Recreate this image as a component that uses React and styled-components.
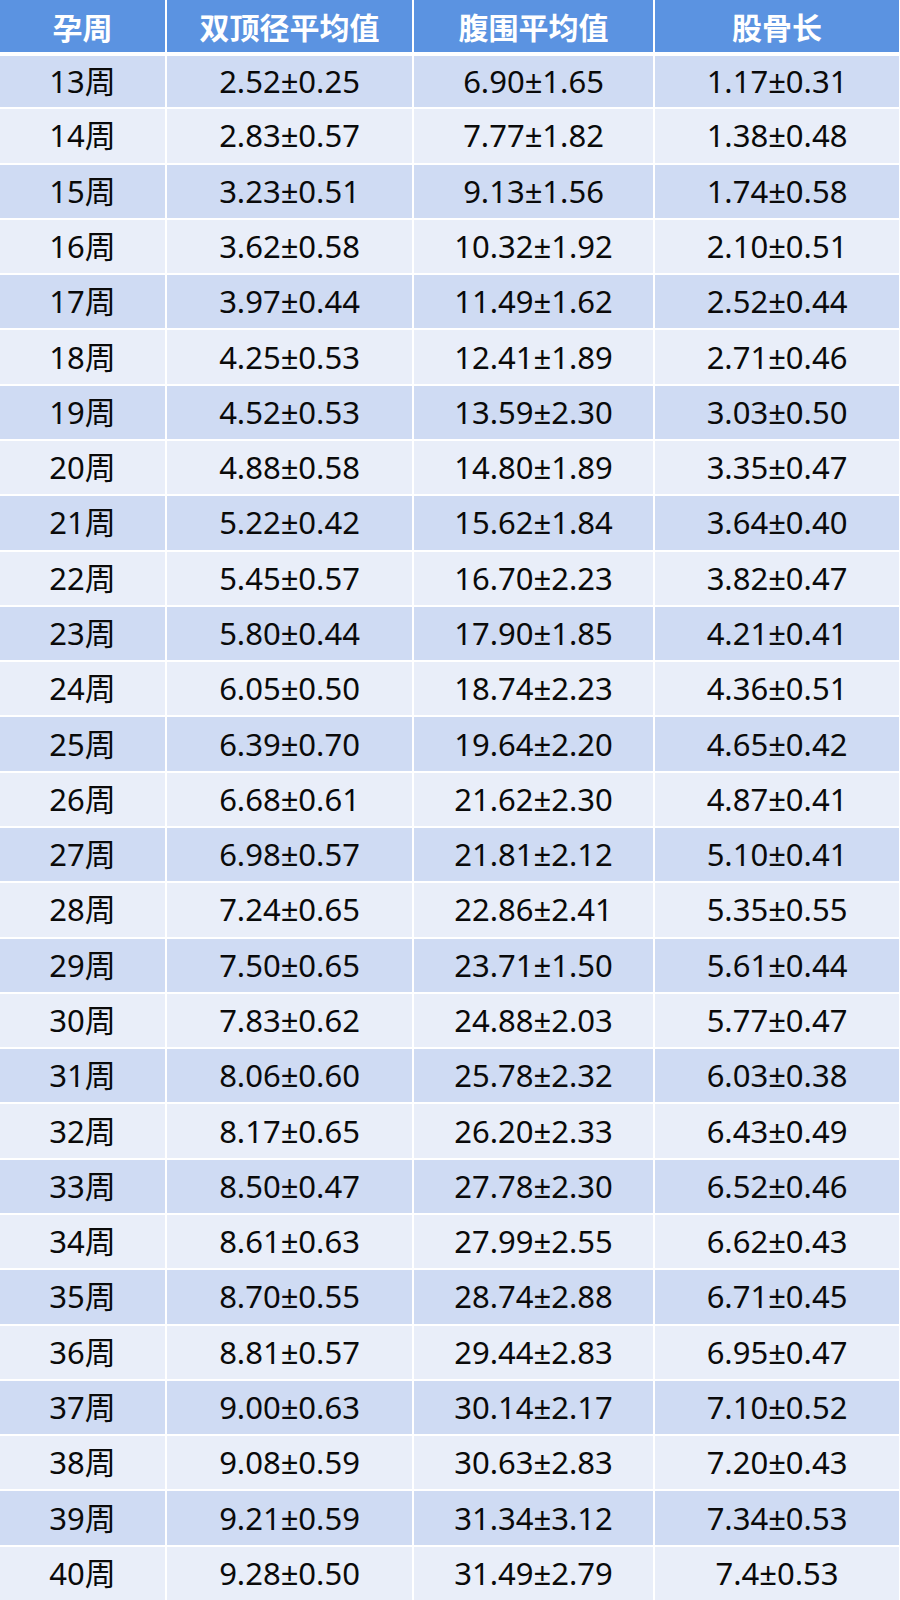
import React from 'react';
import styled, { createGlobalStyle } from 'styled-components';

const GlobalStyle = createGlobalStyle`
  html, body {
    margin: 0;
    padding: 0;
    background: #ffffff;
  }
  body {
    font-family: "Noto Sans", "Noto Sans CJK SC", sans-serif;
  }
`;

const rows = [
  ['13周', '2.52±0.25', '6.90±1.65', '1.17±0.31'],
  ['14周', '2.83±0.57', '7.77±1.82', '1.38±0.48'],
  ['15周', '3.23±0.51', '9.13±1.56', '1.74±0.58'],
  ['16周', '3.62±0.58', '10.32±1.92', '2.10±0.51'],
  ['17周', '3.97±0.44', '11.49±1.62', '2.52±0.44'],
  ['18周', '4.25±0.53', '12.41±1.89', '2.71±0.46'],
  ['19周', '4.52±0.53', '13.59±2.30', '3.03±0.50'],
  ['20周', '4.88±0.58', '14.80±1.89', '3.35±0.47'],
  ['21周', '5.22±0.42', '15.62±1.84', '3.64±0.40'],
  ['22周', '5.45±0.57', '16.70±2.23', '3.82±0.47'],
  ['23周', '5.80±0.44', '17.90±1.85', '4.21±0.41'],
  ['24周', '6.05±0.50', '18.74±2.23', '4.36±0.51'],
  ['25周', '6.39±0.70', '19.64±2.20', '4.65±0.42'],
  ['26周', '6.68±0.61', '21.62±2.30', '4.87±0.41'],
  ['27周', '6.98±0.57', '21.81±2.12', '5.10±0.41'],
  ['28周', '7.24±0.65', '22.86±2.41', '5.35±0.55'],
  ['29周', '7.50±0.65', '23.71±1.50', '5.61±0.44'],
  ['30周', '7.83±0.62', '24.88±2.03', '5.77±0.47'],
  ['31周', '8.06±0.60', '25.78±2.32', '6.03±0.38'],
  ['32周', '8.17±0.65', '26.20±2.33', '6.43±0.49'],
  ['33周', '8.50±0.47', '27.78±2.30', '6.52±0.46'],
  ['34周', '8.61±0.63', '27.99±2.55', '6.62±0.43'],
  ['35周', '8.70±0.55', '28.74±2.88', '6.71±0.45'],
  ['36周', '8.81±0.57', '29.44±2.83', '6.95±0.47'],
  ['37周', '9.00±0.63', '30.14±2.17', '7.10±0.52'],
  ['38周', '9.08±0.59', '30.63±2.83', '7.20±0.43'],
  ['39周', '9.21±0.59', '31.34±3.12', '7.34±0.53'],
  ['40周', '9.28±0.50', '31.49±2.79', '7.4±0.53'],
];

const headers = ['孕周', '双顶径平均值', '腹围平均值', '股骨长'];

const Table = styled.div`
  width: 900px;
  height: 1600px;
  display: grid;
  grid-template-columns: 165px 245px 239px 244px;
  grid-template-rows: 52px repeat(28, 1fr);
  column-gap: 2px;
  padding-right: 3px;
  box-sizing: border-box;
  background: #ffffff;
  overflow: hidden;
`;

const HeadCell = styled.div`
  background: #5b93e1;
  color: #ffffff;
  font-family: "Noto Sans CJK SC", sans-serif;
  font-weight: 700;
  font-size: 30px;
  display: flex;
  align-items: center;
  justify-content: center;
  height: 52px;
`;

const Cell = styled.div`
  background: ${(p) => (p.$odd ? '#cfdbf3' : '#e9eef9')};
  color: #0a0a0a;
  font-size: 31px;
  display: flex;
  align-items: center;
  justify-content: center;
  margin-top: 2px;
  line-height: 1;
  &:nth-child(-n + 8) {
    margin-top: 4px;
  }
`;

export default function App() {
  return (
    <>
      <GlobalStyle />
      <Table>
        {headers.map((h) => (
          <HeadCell key={h}>{h}</HeadCell>
        ))}
        {rows.map((r, i) =>
          r.map((v, j) => (
            <Cell key={`${i}-${j}`} $odd={i % 2 === 0}>
              {v}
            </Cell>
          ))
        )}
      </Table>
    </>
  );
}
